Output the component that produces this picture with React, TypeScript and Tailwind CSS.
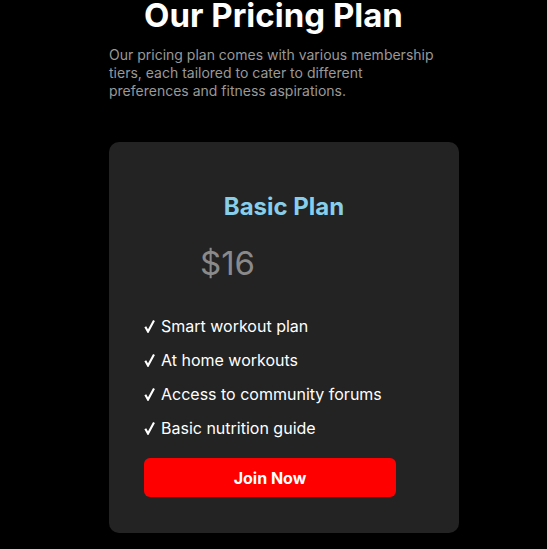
function Check() {
  return (
    <svg width="11" height="14" viewBox="0 0 11 14" className="mr-[6px] inline-block -mt-[3px] align-middle">
      <path d="M1.3 7.8 L4 12.6 L10 1.4" fill="none" stroke="white" strokeWidth="2.1" strokeLinejoin="miter" />
    </svg>
  )
}

export default function App() {
  const features = ['Smart workout plan', 'At home workouts', 'Access to community forums', 'Basic nutrition guide']

  return (
    <div className="min-h-[549px] w-full bg-black font-['Inter','Noto_Sans',sans-serif] overflow-hidden">
      {/* Heading */}
      <h1 className="-mt-[1px] text-center text-[33px] font-bold leading-none text-white">Our Pricing Plan</h1>
      <p className="ml-[109px] mt-[14px] w-[330px] text-[14px] leading-[18px] text-[#999999]">
        Our pricing plan comes with various membership tiers, each tailored to cater to different preferences and fitness
        aspirations.
      </p>

      {/* Card */}
      <div className="ml-[109px] mt-[42px] w-[350px] rounded-[10px] bg-[#232323] px-[35px] pt-[51px] pb-[36px]">
        <h2 className="text-center text-[24px] font-bold leading-[28px] text-[#87ceeb]">Basic Plan</h2>
        <div className="ml-[56px] mt-[22px] text-[33px] leading-[40px] text-[#8a8a8a]">$16</div>
        <ul className="mt-[33px] flex flex-col gap-[14px]">
          {features.map((f) => (
            <li key={f} className="h-[20px] text-[16px] leading-[20px] text-white">
              <Check />
              {f}
            </li>
          ))}
        </ul>
        <button
          type="button"
          className="mt-[20px] h-[39px] w-[90%] rounded-[6px] bg-[#ff0000] text-[16px] font-bold text-white"
        >
          Join Now
        </button>
      </div>
    </div>
  )
}
